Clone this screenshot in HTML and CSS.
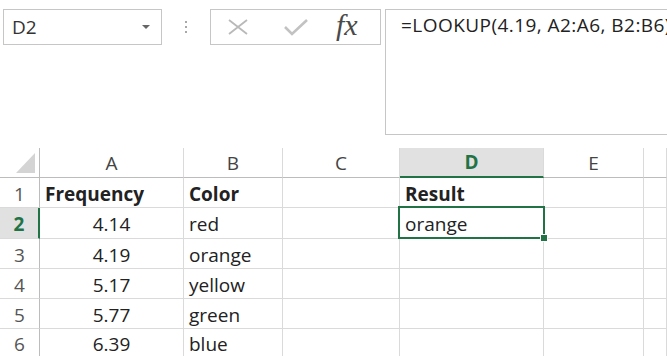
FILE: index.html
```html
<!DOCTYPE html>
<html>
<head>
    <meta charset="UTF-8">
    <title>LOOKUP</title>
    <link rel="stylesheet" href="styles.css">
</head>
<body>
    <div class="toolbar">
        <div class="name-box">
            <span>D2</span>
            <span class="name-arrow"></span>
        </div>
        <div class="grip"><span></span><span></span><span></span></div>
        <div class="func-box">
            <svg class="icon-cancel" width="22" height="18" viewBox="0 0 22 18">
                <path d="M2 2 L20 16 M20 2 L2 16" stroke="#b9b9b9" stroke-width="1.8" fill="none"/>
            </svg>
            <svg class="icon-enter" width="26" height="18" viewBox="0 0 26 18">
                <path d="M2 9 L9 16 L24 2" stroke="#c2c2c2" stroke-width="2.6" fill="none"/>
            </svg>
            <span class="fx">fx</span>
        </div>
        <div class="formula-box">=LOOKUP(4.19, A2:A6, B2:B6)</div>
    </div>

    <div class="sheet">
        <div class="corner"><span class="corner-tri"></span></div>
        <div class="col-hdr">A</div>
        <div class="col-hdr">B</div>
        <div class="col-hdr">C</div>
        <div class="col-hdr active">D</div>
        <div class="col-hdr">E</div>
        <div class="col-hdr"></div>

        <div class="row-hdr">1</div>
        <div class="cell bold">Frequency</div>
        <div class="cell bold">Color</div>
        <div class="cell"></div>
        <div class="cell bold">Result</div>
        <div class="cell"></div>
        <div class="cell"></div>

        <div class="row-hdr active">2</div>
        <div class="cell num">4.14</div>
        <div class="cell">red</div>
        <div class="cell"></div>
        <div class="cell selected">orange</div>
        <div class="cell"></div>
        <div class="cell"></div>

        <div class="row-hdr">3</div>
        <div class="cell num">4.19</div>
        <div class="cell">orange</div>
        <div class="cell"></div>
        <div class="cell"></div>
        <div class="cell"></div>
        <div class="cell"></div>

        <div class="row-hdr">4</div>
        <div class="cell num">5.17</div>
        <div class="cell">yellow</div>
        <div class="cell"></div>
        <div class="cell"></div>
        <div class="cell"></div>
        <div class="cell"></div>

        <div class="row-hdr">5</div>
        <div class="cell num">5.77</div>
        <div class="cell">green</div>
        <div class="cell"></div>
        <div class="cell"></div>
        <div class="cell"></div>
        <div class="cell"></div>

        <div class="row-hdr">6</div>
        <div class="cell num">6.39</div>
        <div class="cell">blue</div>
        <div class="cell"></div>
        <div class="cell"></div>
        <div class="cell"></div>
        <div class="cell"></div>
    </div>
</body>
</html>
```

FILE: styles.css
```css
html, body {
    margin: 0;
    height: 100%;
    overflow: hidden;
}

body {
    font-family: "Open Sans", "Noto Sans", sans-serif;
    font-size: 19px;
    color: #222;
    background: #fff;
    display: flex;
    flex-direction: column;
}

.toolbar {
    display: flex;
    align-items: flex-start;
    padding: 9px 0 0 3px;
    height: 148px;
    box-sizing: border-box;
    flex-shrink: 0;
}

.name-box {
    width: 159px;
    height: 36px;
    box-sizing: border-box;
    border: 1px solid #c6c6c6;
    display: flex;
    align-items: center;
    justify-content: space-between;
    padding: 0 11px 0 8px;
    color: #333;
}
.name-arrow {
    width: 0;
    height: 0;
    border-left: 4px solid transparent;
    border-right: 4px solid transparent;
    border-top: 4px solid #666;
}

.grip {
    width: 48px;
    height: 36px;
    display: flex;
    flex-direction: column;
    align-items: center;
    justify-content: center;
    gap: 3px;
}
.grip span {
    width: 2px;
    height: 2px;
    background: #a8a8a8;
}

.func-box {
    width: 171px;
    height: 36px;
    box-sizing: border-box;
    border: 1px solid #c6c6c6;
    display: flex;
    align-items: center;
    padding-left: 16px;
}
.icon-cancel {
    margin-right: 34px;
}
.icon-enter {
    margin-right: 27px;
}
.fx {
    font-family: "Liberation Serif", "DejaVu Serif", serif;
    font-style: italic;
    font-size: 30px;
    color: #4a4a4a;
    margin-top: -4px;
}

.formula-box {
    margin-left: 4px;
    flex: 1;
    height: 126px;
    box-sizing: border-box;
    border: 1px solid #c6c6c6;
    border-right: none;
    padding: 2px 0 0 15px;
    white-space: nowrap;
    overflow: hidden;
    letter-spacing: 0.45px;
    color: #222;
}

.sheet {
    flex: 1;
    display: grid;
    grid-template-columns: 40px 144px 99px 117px 144px 100px 1fr;
    grid-template-rows: 30px 30px 31px 30px 30px 30px 1fr;
    border-bottom: 2px solid #7d7d7d;
}

.corner {
    position: relative;
    border-right: 1px solid #bcbcbc;
    border-bottom: 1px solid #bcbcbc;
}
.corner-tri {
    position: absolute;
    right: 4px;
    bottom: 4px;
    width: 0;
    height: 0;
    border-left: 19px solid transparent;
    border-bottom: 20px solid #d4d4d4;
}

.col-hdr {
    border-right: 1px solid #dadada;
    border-bottom: 1px solid #bcbcbc;
    color: #444;
    display: flex;
    align-items: center;
    justify-content: center;
}
.col-hdr.active {
    background: #e1e1e1;
    color: #217346;
    font-weight: bold;
    border-bottom: 2px solid #217346;
}

.row-hdr {
    border-right: 1px solid #bcbcbc;
    border-bottom: 1px solid #dadada;
    color: #555;
    display: flex;
    align-items: center;
    justify-content: center;
    padding-top: 2px;
}
.row-hdr.active {
    background: #e1e1e1;
    color: #217346;
    font-weight: bold;
    border-right: 2px solid #217346;
}

.cell {
    border-right: 1px solid #dadada;
    border-bottom: 1px solid #dadada;
    display: flex;
    align-items: center;
    padding: 2px 0 0 5px;
    white-space: nowrap;
    overflow: hidden;
}
.cell.bold {
    font-weight: bold;
}
.cell.num {
    justify-content: center;
    padding-left: 0;
}
.cell.selected {
    position: relative;
    overflow: visible;
}
.cell.selected::before {
    content: "";
    position: absolute;
    left: -2px;
    top: -2px;
    right: -2px;
    bottom: -1px;
    border: 2px solid #217346;
}
.cell.selected::after {
    content: "";
    position: absolute;
    right: -5px;
    bottom: -4px;
    width: 6px;
    height: 6px;
    background: #217346;
    border: 1px solid #fff;
}
```
